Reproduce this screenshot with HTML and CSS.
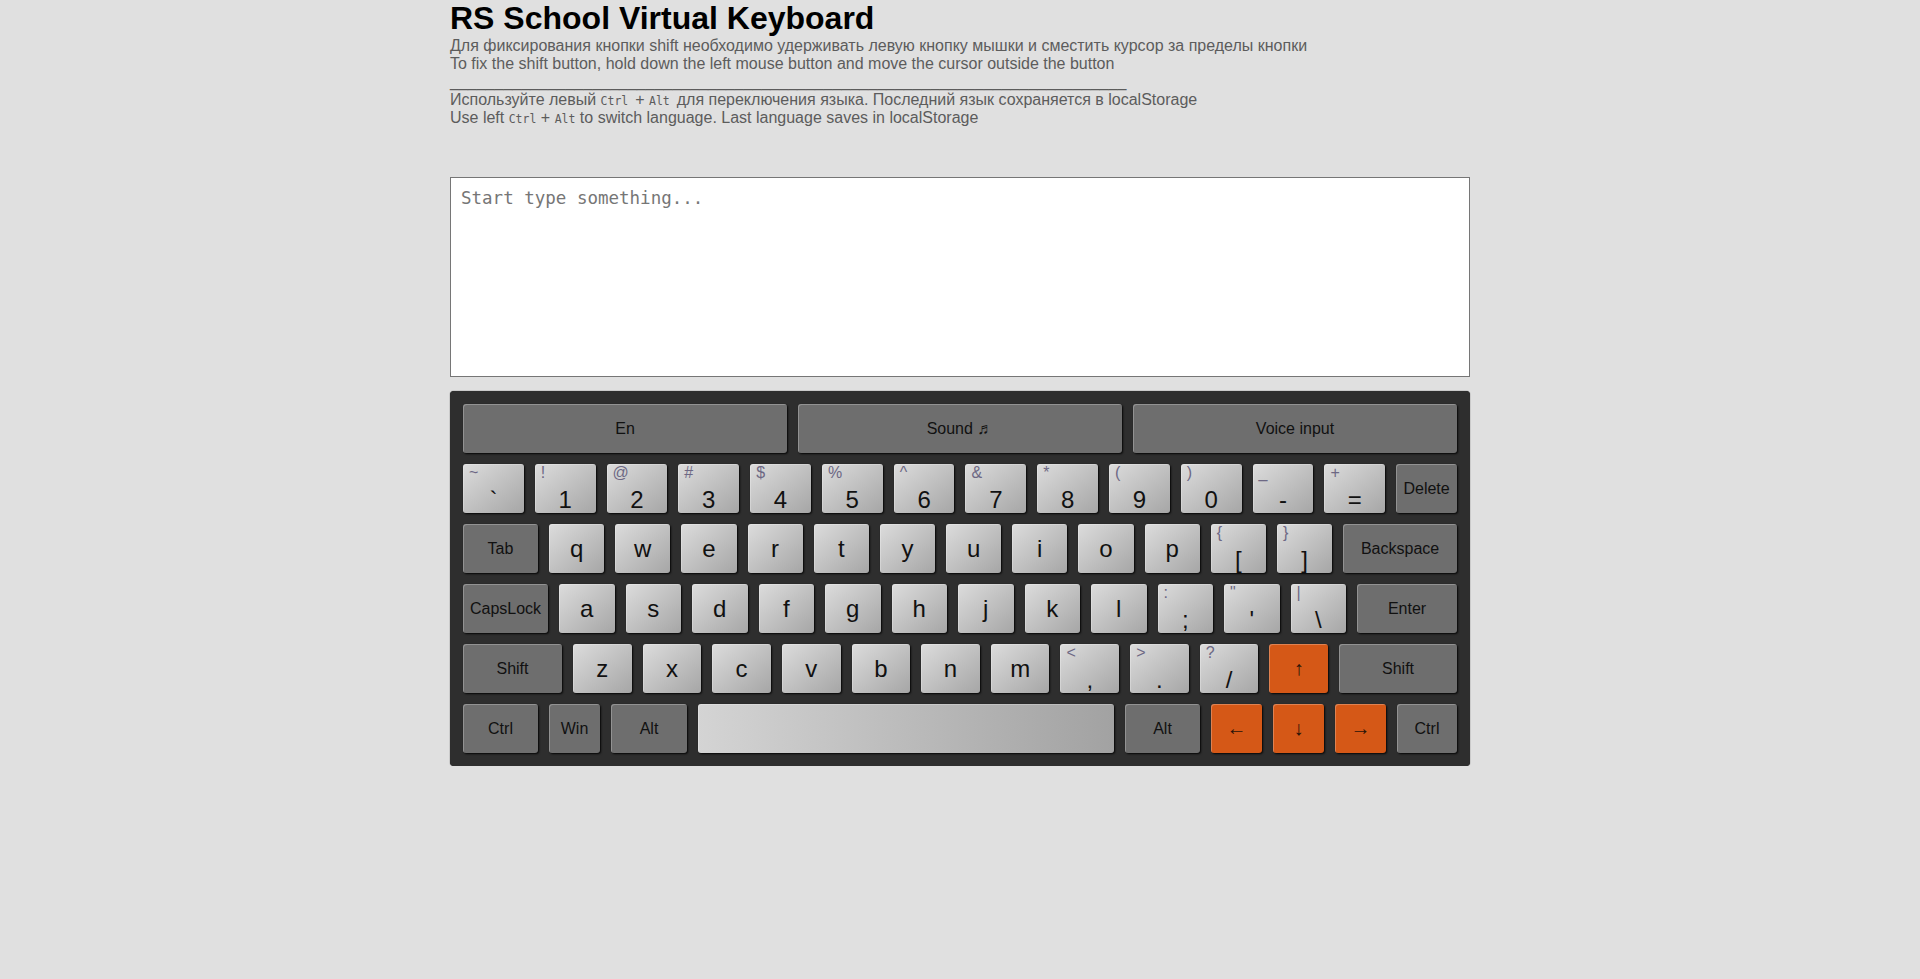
FILE: index.html
```html
<!DOCTYPE html>
<html lang="en">
<head>
<meta charset="utf-8">
<title>RS School Virtual Keyboard</title>
<link rel="stylesheet" href="styles.css">
</head>
<body>
<main class="page">
  <h1 class="title">RS School Virtual Keyboard</h1>
  <p class="notes">Для фиксирования кнопки shift необходимо удерживать левую кнопку мышки и сместить курсор за пределы кнопки<br>To fix the shift button, hold down the left mouse button and move the cursor outside the button<br>____________________________________________________________________________<br>Используйте левый <code>Ctrl </code>+ <code>Alt </code>для переключения языка. Последний язык сохраняется в localStorage<br>Use left <code>Ctrl</code> + <code>Alt</code> to switch language. Last language saves in localStorage</p>
  <textarea class="output" placeholder="Start type something..."></textarea>
  <section class="keyboard">
    <div class="row">
      <button class="key special btn">En</button>
      <button class="key special btn">Sound ♬</button>
      <button class="key special btn">Voice input</button>
    </div>
    <div class="row">
      <div class="key dual"><span class="sub">~</span><span class="main">`</span></div>
      <div class="key dual"><span class="sub">!</span><span class="main">1</span></div>
      <div class="key dual"><span class="sub">@</span><span class="main">2</span></div>
      <div class="key dual"><span class="sub">#</span><span class="main">3</span></div>
      <div class="key dual"><span class="sub">$</span><span class="main">4</span></div>
      <div class="key dual"><span class="sub">%</span><span class="main">5</span></div>
      <div class="key dual"><span class="sub">^</span><span class="main">6</span></div>
      <div class="key dual"><span class="sub">&amp;</span><span class="main">7</span></div>
      <div class="key dual"><span class="sub">*</span><span class="main">8</span></div>
      <div class="key dual"><span class="sub">(</span><span class="main">9</span></div>
      <div class="key dual"><span class="sub">)</span><span class="main">0</span></div>
      <div class="key dual"><span class="sub">_</span><span class="main">-</span></div>
      <div class="key dual"><span class="sub">+</span><span class="main">=</span></div>
      <div class="key special">Delete</div>
    </div>
    <div class="row">
      <div class="key special w-tab">Tab</div>
      <div class="key">q</div>
      <div class="key">w</div>
      <div class="key">e</div>
      <div class="key">r</div>
      <div class="key">t</div>
      <div class="key">y</div>
      <div class="key">u</div>
      <div class="key">i</div>
      <div class="key">o</div>
      <div class="key">p</div>
      <div class="key dual"><span class="sub">{</span><span class="main">[</span></div>
      <div class="key dual"><span class="sub">}</span><span class="main">]</span></div>
      <div class="key special w-back">Backspace</div>
    </div>
    <div class="row">
      <div class="key special w-caps">CapsLock</div>
      <div class="key">a</div>
      <div class="key">s</div>
      <div class="key">d</div>
      <div class="key">f</div>
      <div class="key">g</div>
      <div class="key">h</div>
      <div class="key">j</div>
      <div class="key">k</div>
      <div class="key">l</div>
      <div class="key dual"><span class="sub">:</span><span class="main">;</span></div>
      <div class="key dual"><span class="sub">"</span><span class="main">'</span></div>
      <div class="key dual"><span class="sub">|</span><span class="main">\</span></div>
      <div class="key special w-enter">Enter</div>
    </div>
    <div class="row">
      <div class="key special w-shiftl">Shift</div>
      <div class="key">z</div>
      <div class="key">x</div>
      <div class="key">c</div>
      <div class="key">v</div>
      <div class="key">b</div>
      <div class="key">n</div>
      <div class="key">m</div>
      <div class="key dual"><span class="sub">&lt;</span><span class="main">,</span></div>
      <div class="key dual"><span class="sub">&gt;</span><span class="main">.</span></div>
      <div class="key dual"><span class="sub">?</span><span class="main">/</span></div>
      <div class="key arrow">↑</div>
      <div class="key special w-shiftr">Shift</div>
    </div>
    <div class="row">
      <div class="key special w-ctrl">Ctrl</div>
      <div class="key special w-win">Win</div>
      <div class="key special w-alt">Alt</div>
      <div class="key space"></div>
      <div class="key special w-altr">Alt</div>
      <div class="key arrow w-arrow">←</div>
      <div class="key arrow w-arrow">↓</div>
      <div class="key arrow w-arrow">→</div>
      <div class="key special w-ctrlr">Ctrl</div>
    </div>
  </section>
</main>
</body>
</html>
```

FILE: styles.css
```css
html, body {
  margin: 0;
  padding: 0;
  background: #e0e0e0;
}

body {
  font-family: "Liberation Sans", Arial, sans-serif;
  color: #111;
}

.page {
  width: 1020px;
  margin: 0 auto;
}

.title {
  margin: 0;
  font-size: 32px;
  font-weight: bold;
  color: #000;
}

.notes {
  margin: 0 0 50px;
  font-size: 16px;
  color: #5c5c5c;
}

.notes code {
  font-family: "DejaVu Sans Mono", monospace;
  font-size: 11.5px;
}

.output {
  display: block;
  box-sizing: border-box;
  width: 1020px;
  height: 200px;
  margin: 0 0 14px;
  padding: 10px;
  border: 1px solid #767676;
  border-radius: 0;
  background: #fff;
  resize: none;
  font-family: "DejaVu Sans Mono", monospace;
  font-size: 17.5px;
  color: #222;
}

.output::placeholder {
  color: #767676;
}

.keyboard {
  display: flex;
  flex-direction: column;
  gap: 11px;
  padding: 13px;
  background: #2e2e2e;
  border-radius: 4px;
  box-shadow: 0 0 1px #000;
}

.row {
  display: flex;
  gap: 11px;
  height: 49px;
}

.key {
  position: relative;
  flex: 1 1 0;
  box-sizing: border-box;
  display: flex;
  align-items: center;
  justify-content: center;
  border: none;
  border-radius: 3px;
  background: linear-gradient(to bottom right, #dcdcdc, #a6a6a6);
  box-shadow: 1px 1px 2px rgba(0, 0, 0, 0.9), inset 1px 1px 0 rgba(255, 255, 255, 0.25);
  font-family: "Liberation Sans", Arial, sans-serif;
  font-size: 24px;
  color: #111;
  padding: 0;
}

.key.dual {
  flex-direction: column;
  justify-content: flex-end;
}

.key .sub {
  position: absolute;
  top: 0;
  left: 6px;
  font-size: 16px;
  color: #6d6884;
}

.key .main {
  line-height: 27px;
}

.key.special {
  background: #6e6e6e;
  font-size: 16px;
  color: #111;
}

.key.btn {
  font-size: 16px;
}

.key.arrow {
  background: #d55817;
  font-size: 20px;
  color: #2a1408;
}

.key.space {
  background: linear-gradient(to right, #d4d4d4, #a2a2a2);
}

.w-tab { flex: 0 0 75px; }
.w-back { flex: 0 0 114px; }
.w-caps { flex: 0 0 85px; }
.w-enter { flex: 0 0 100px; }
.w-shiftl { flex: 0 0 99px; }
.w-shiftr { flex: 0 0 118px; }
.w-ctrl { flex: 0 0 75px; }
.w-win { flex: 0 0 51px; }
.w-alt { flex: 0 0 76px; }
.w-altr { flex: 0 0 75px; }
.w-arrow { flex: 0 0 51px; }
.w-ctrlr { flex: 0 0 60px; }
```
